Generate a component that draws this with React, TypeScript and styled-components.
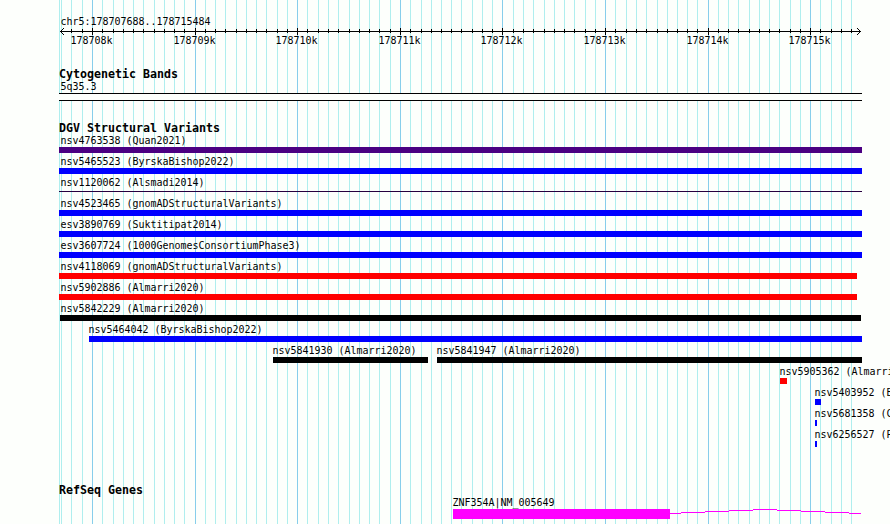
import React from "react";
import styled, { createGlobalStyle } from "styled-components";

const GlobalStyle = createGlobalStyle`
  html, body { margin: 0; padding: 0; overflow: hidden; }
  body { background: #fdfffc; }
`;

const Browser = styled.main`
  position: relative;
  width: 890px;
  height: 524px;
  overflow: hidden;
  background: #fdfffc;
  color: #000;
  font-family: "DejaVu Sans Mono", monospace;
  font-size: 10px;
`;

const GridLayer = styled.svg`
  position: absolute;
  inset: 0;
  display: block;
`;

const Content = styled.div`
  position: relative;
  display: flex;
  flex-direction: column;
  height: 524px;
  padding-top: 16px;
  box-sizing: border-box;
`;

const Label = styled.div<{ $x: number }>`
  height: 12px;
  line-height: 12px;
  margin-left: ${(p) => p.$x + 0.5}px;
  font-size: 9.97px;
  white-space: pre;
`;

const Heading = styled.h2`
  margin: 0 0 1px 59px;
  height: 12px;
  font-size: 11.63px;
  line-height: 12px;
  font-weight: 700;
  white-space: pre;
`;

const Ruler = styled.section`
  height: 52px;
`;

const Axis = styled.svg`
  display: block;
  height: 7px;
`;

const TickLabels = styled.div`
  display: grid;
  grid-template-columns: 103px 102px 103px 102px 103px 103px 102px 60px;
  padding-left: 70px;
`;

const BandTrack = styled.section`
  height: 54px;
`;

const Band = styled.div`
  width: 803px;
  height: 8px;
  margin-left: 59px;
  box-sizing: border-box;
  border: solid #000;
  border-width: 1px 0;
  background: #fdfffc;
`;

const VariantTrack = styled.section`
  height: 362px;
`;

const Row = styled.div`
  display: flex;
  height: 21px;
`;

const Feature = styled.div<{ $gap: number; $width: number }>`
  flex: 0 0 ${(p) => p.$width}px;
  width: ${(p) => p.$width}px;
  margin-left: ${(p) => p.$gap}px;
`;

const Bar = styled.div<{ $color: string; $thin?: boolean }>`
  height: ${(p) => (p.$thin ? 1 : 6)}px;
  margin-top: ${(p) => (p.$thin ? 2 : 0)}px;
  background: ${(p) => p.$color};
`;

const GeneTrack = styled.section`
  height: 40px;
`;

const Gene = styled.svg`
  display: block;
`;

const minor = [
  59, 61, 71, 82, 102, 113, 123, 133, 143, 154, 164, 174, 184, 205, 215, 225,
  236, 246, 256, 266, 277, 287, 307, 318, 328, 338, 349, 359, 369, 379, 390,
  410, 421, 431, 441, 451, 461, 472, 482, 492, 513, 523, 533, 544, 554, 564,
  574, 585, 595, 615, 626, 636, 646, 657, 667, 677, 687, 697, 718, 728, 738,
  749, 759, 769, 779, 790, 800, 820, 831, 841, 851,
];
const major = [92, 195, 297, 400, 502, 605, 708, 810];

type Item = { name: string; start: number; end: number; color: string; labelX?: number; thin?: boolean };

const rows: Item[][] = [
  [{ name: "nsv4763538 (Quan2021)", start: 59, end: 862, color: "#4b0082", labelX: 1 }],
  [{ name: "nsv5465523 (ByrskaBishop2022)", start: 59, end: 862, color: "#0000ff", labelX: 1 }],
  [{ name: "nsv1120062 (Alsmadi2014)", start: 59, end: 862, color: "#26003f", labelX: 1, thin: true }],
  [{ name: "nsv4523465 (gnomADStructuralVariants)", start: 59, end: 862, color: "#0000ff", labelX: 1 }],
  [{ name: "esv3890769 (Suktitipat2014)", start: 59, end: 862, color: "#0000ff", labelX: 1 }],
  [{ name: "esv3607724 (1000GenomesConsortiumPhase3)", start: 59, end: 862, color: "#0000ff", labelX: 1 }],
  [{ name: "nsv4118069 (gnomADStructuralVariants)", start: 59, end: 857, color: "#ff0000", labelX: 1 }],
  [{ name: "nsv5902886 (Almarri2020)", start: 59, end: 857, color: "#ff0000", labelX: 1 }],
  [{ name: "nsv5842229 (Almarri2020)", start: 60, end: 861, color: "#000000" }],
  [{ name: "nsv5464042 (ByrskaBishop2022)", start: 89, end: 862, color: "#0000ff", labelX: -1 }],
  [
    { name: "nsv5841930 (Almarri2020)", start: 273, end: 428, color: "#000000", labelX: -1 },
    { name: "nsv5841947 (Almarri2020)", start: 437, end: 862, color: "#000000", labelX: -1 },
  ],
  [{ name: "nsv5905362 (Almarri2020)", start: 780, end: 787, color: "#ff0000", labelX: -1 }],
  [{ name: "nsv5403952 (B", start: 815, end: 821, color: "#0000ff", labelX: -1 }],
  [{ name: "nsv5681358 (C", start: 815, end: 817, color: "#0000ff", labelX: -1 }],
  [{ name: "nsv6256527 (P", start: 815, end: 817, color: "#0000ff", labelX: -1 }],
];

export default function App() {
  return (
    <>
      <GlobalStyle />
      <Browser>
        <GridLayer width="890" height="524" shapeRendering="crispEdges">
          {minor.map((x) => (
            <rect key={x} x={x} y="0" width="1" height="524" fill="#afeeee" />
          ))}
          {major.map((x) => (
            <rect key={x} x={x} y="0" width="1" height="524" fill="#87ceeb" />
          ))}
        </GridLayer>
        <Content>
          <Ruler>
            <Label $x={60}>chr5:178707688..178715484</Label>
            <Axis width="890" height="7" viewBox="0 28 890 7">
              <g shapeRendering="crispEdges">
                <rect x="60" y="31" width="801" height="1" />
                {minor.slice(2).map((x) => (
                  <rect key={x} x={x} y="29" width="1" height="4" />
                ))}
                {major.map((x) => (
                  <rect key={x} x={x} y="28" width="1" height="7" />
                ))}
                {[1, 2, 3].map((d) => (
                  <g key={d}>
                    <rect x={60 + d} y={31 - d} width="1" height="1" />
                    <rect x={60 + d} y={31 + d} width="1" height="1" />
                    <rect x={860 - d} y={31 - d} width="1" height="1" />
                    <rect x={860 - d} y={31 + d} width="1" height="1" />
                  </g>
                ))}
              </g>
            </Axis>
            <TickLabels>
              {major.map((x, i) => (
                <Label key={x} $x={0}>{`${178708 + i}k`}</Label>
              ))}
            </TickLabels>
          </Ruler>
          <BandTrack>
            <Heading>Cytogenetic Bands</Heading>
            <Label $x={60}>5q35.3</Label>
            <Band />
          </BandTrack>
          <VariantTrack>
            <Heading>DGV Structural Variants</Heading>
            {rows.map((row) => (
              <Row key={row[0].name}>
                {row.map((f, i) => (
                  <Feature key={f.name} $gap={f.start - (i ? row[i - 1].end : 0)} $width={f.end - f.start}>
                    <Label $x={f.labelX ?? 0}>{f.name}</Label>
                    <Bar $color={f.color} $thin={f.thin} />
                  </Feature>
                ))}
              </Row>
            ))}
          </VariantTrack>
          <GeneTrack>
            <Heading>RefSeq Genes</Heading>
            <Label $x={452}>ZNF354A|NM_005649</Label>
            <Gene width="890" height="10" viewBox="0 509 890 10" shapeRendering="crispEdges" fill="#ff00ff">
              <rect x="453" y="509" width="217" height="10" />
              <rect x="670" y="513" width="11" height="1" />
              {[512, 511, 510, 509, 510, 511, 512].map((y, i) => (
                <rect key={i} x={681 + i * 24} y={y} width="24" height="1" />
              ))}
              <rect x="849" y="513" width="12" height="1" />
            </Gene>
          </GeneTrack>
        </Content>
      </Browser>
    </>
  );
}
